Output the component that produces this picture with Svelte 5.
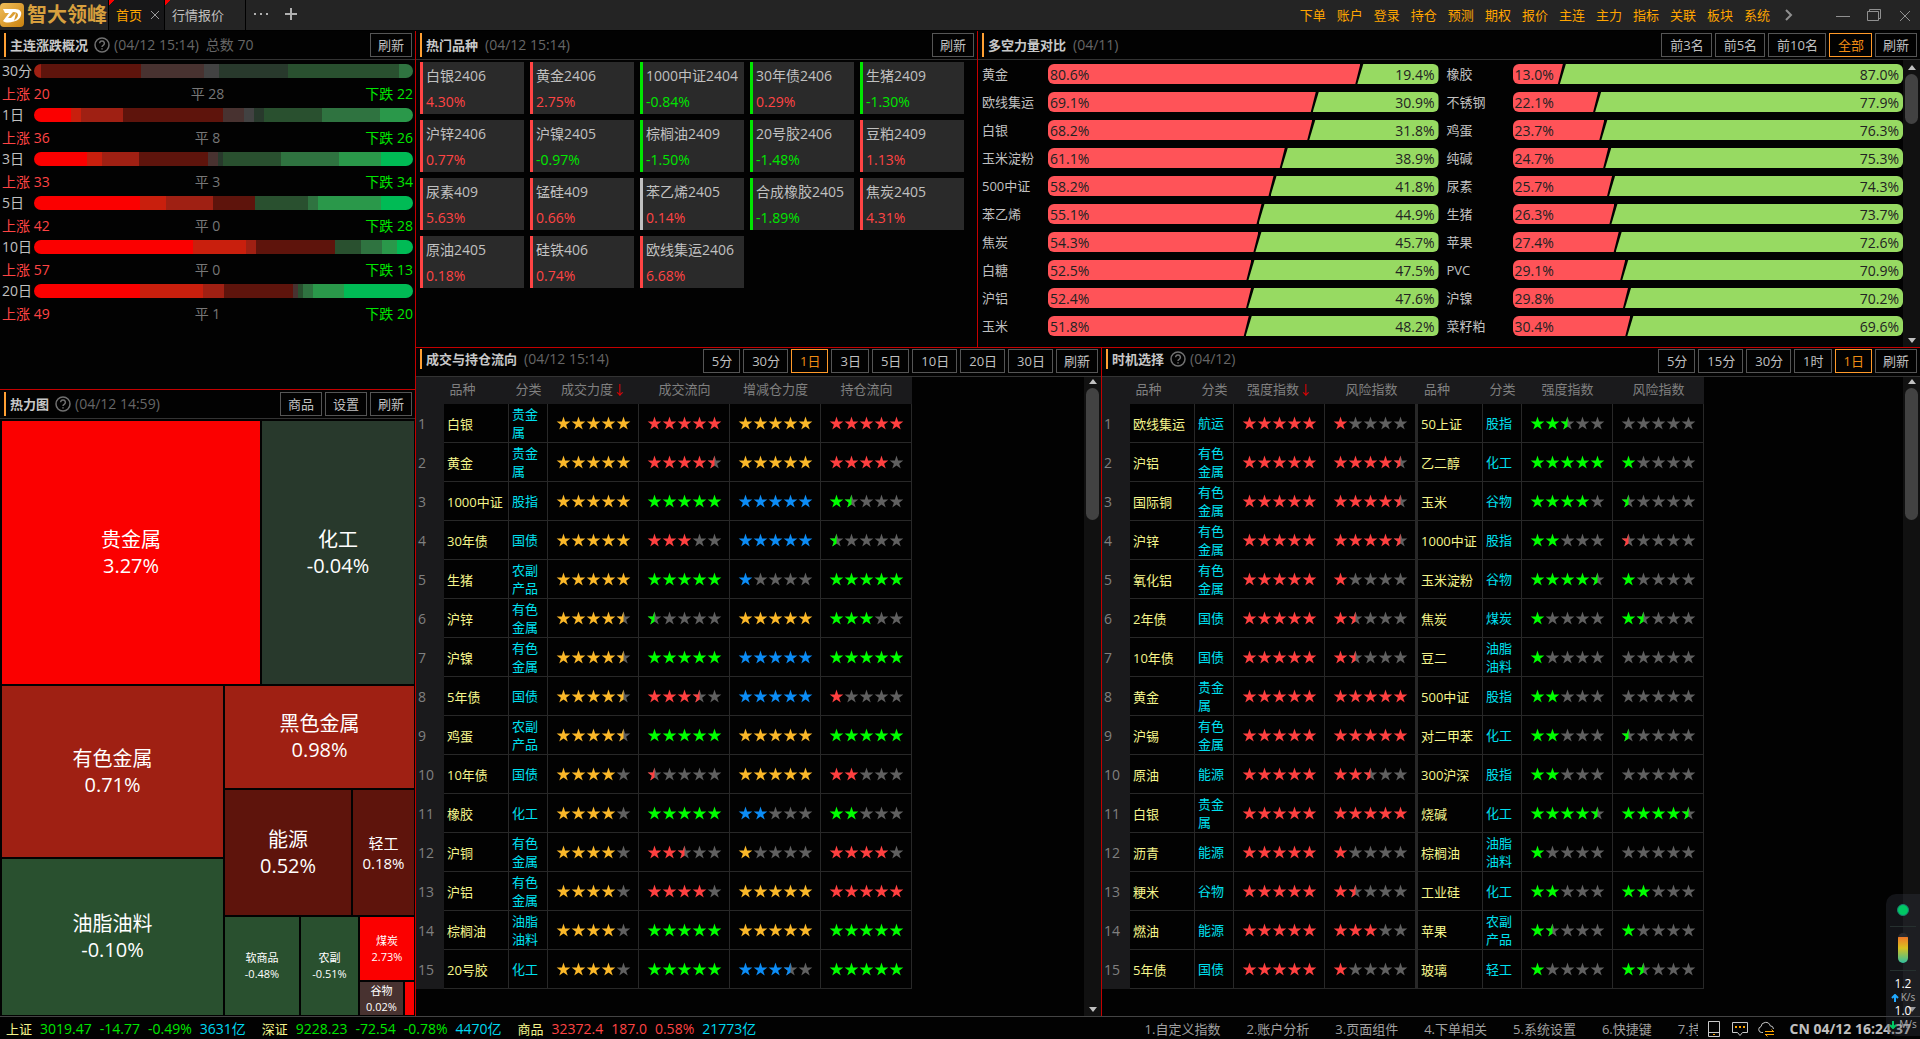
<script lang="ts">
  const menus = ['下单', '账户', '登录', '持仓', '预测', '期权', '报价', '主连', '主力', '指标', '关联', '板块', '系统'];

  // Segment colours go from strong rise to strong fall
  const c = {
    r4: '#fb0000', r3: '#c91f0d', r2: '#9f2013', r1: '#5e140c', r0: '#483230',
    n: '#424242',
    g0: '#28392c', g1: '#29502f', g2: '#2f7340', g3: '#2a984a', g4: '#00bb55'
  };

  const periods = [
    { name: '30分', up: 20, flat: 28, down: 22, segs: [[c.r2, 21], [c.r1, 300], [c.r0, 189], [c.n, 45], [c.g0, 207], [c.g1, 333], [c.g2, 42]] },
    { name: '1日', up: 36, flat: 8, down: 26, segs: [[c.r4, 111], [c.r3, 30], [c.r2, 126], [c.r1, 300], [c.r0, 63], [c.n, 30], [c.g0, 30], [c.g1, 174], [c.g2, 174], [c.g3, 99]] },
    { name: '3日', up: 33, flat: 3, down: 34, segs: [[c.r4, 159], [c.r3, 45], [c.r2, 111], [c.r1, 207], [c.r0, 30], [c.g0, 15], [c.g1, 174], [c.g2, 174], [c.g3, 126], [c.g4, 96]] },
    { name: '5日', up: 42, flat: 0, down: 28, segs: [[c.r4, 318], [c.r3, 78], [c.r2, 141], [c.r1, 126], [c.g1, 159], [c.g2, 30], [c.g3, 189], [c.g4, 96]] },
    { name: '10日', up: 57, flat: 0, down: 13, segs: [[c.r4, 477], [c.r3, 159], [c.r2, 30], [c.r1, 237], [c.g1, 78], [c.g2, 63], [c.g3, 45], [c.g4, 48]] },
    { name: '20日', up: 49, flat: 1, down: 20, segs: [[c.r4, 318], [c.r3, 189], [c.r2, 63], [c.r1, 207], [c.r0, 15], [c.g1, 15], [c.g2, 30], [c.g3, 93], [c.g4, 207]] }
  ];

  const hot = [
    ['白银2406', '4.30%', 'up'], ['黄金2406', '2.75%', 'up'], ['1000中证2404', '-0.84%', 'down'], ['30年债2406', '0.29%', 'down'], ['生猪2409', '-1.30%', 'down'],
    ['沪锌2406', '0.77%', 'up'], ['沪镍2405', '-0.97%', 'up'], ['棕榈油2409', '-1.50%', 'down'], ['20号胶2406', '-1.48%', 'down'], ['豆粕2409', '1.13%', 'up'],
    ['尿素409', '5.63%', 'up'], ['锰硅409', '0.66%', 'up'], ['苯乙烯2405', '0.14%', 'flat'], ['合成橡胶2405', '-1.89%', 'down'], ['焦炭2405', '4.31%', 'up'],
    ['原油2405', '0.18%', 'up'], ['硅铁406', '0.74%', 'up'], ['欧线集运2406', '6.68%', 'up']
  ];

  const power: [string, number][] = [
    ['黄金', 80.6], ['橡胶', 13.0],
    ['欧线集运', 69.1], ['不锈钢', 22.1],
    ['白银', 68.2], ['鸡蛋', 23.7],
    ['玉米淀粉', 61.1], ['纯碱', 24.7],
    ['500中证', 58.2], ['尿素', 25.7],
    ['苯乙烯', 55.1], ['生猪', 26.3],
    ['焦炭', 54.3], ['苹果', 27.4],
    ['白糖', 52.5], ['PVC', 29.1],
    ['沪铝', 52.4], ['沪镍', 29.8],
    ['玉米', 51.8], ['菜籽粕', 30.4]
  ];

  // name, category, then colour letter + number of stars
  const flow = [
    '白银 贵金属 y5 r5 y5 r5',
    '黄金 贵金属 y5 r4.5 y5 r4',
    '1000中证 股指 y5 g5 b5 g1.5',
    '30年债 国债 y5 r3 b5 g0.5',
    '生猪 农副产品 y5 g5 b1 g5',
    '沪锌 有色金属 y4.5 g0.5 y5 g3',
    '沪镍 有色金属 y4.5 g5 b5 g5',
    '5年债 国债 y4.5 r3.5 b5 r1',
    '鸡蛋 农副产品 y4.5 g5 y5 g5',
    '10年债 国债 y4 r0.5 y5 r2',
    '橡胶 化工 y4 g5 b2 g2',
    '沪铜 有色金属 y4 r2.5 y1 r4',
    '沪铝 有色金属 y4 r4 y5 r5',
    '棕榈油 油脂油料 y4 g5 y5 g5',
    '20号胶 化工 y4 g5 b3.5 g5'
  ].map((row) => row.split(' '));

  const timing = [
    '欧线集运 航运 r5 r1 50上证 股指 g2.5 g0',
    '沪铝 有色金属 r5 r4.5 乙二醇 化工 g5 g1',
    '国际铜 有色金属 r5 r4.5 玉米 谷物 g4 g0.5',
    '沪锌 有色金属 r5 r4.5 1000中证 股指 g2 r0.5',
    '氧化铝 有色金属 r5 r1 玉米淀粉 谷物 g4.5 g1',
    '2年债 国债 r5 r1.5 焦炭 煤炭 g1 g1.5',
    '10年债 国债 r5 r1.5 豆二 油脂油料 g1 g0',
    '黄金 贵金属 r5 r5 500中证 股指 g2 g0',
    '沪锡 有色金属 r5 r5 对二甲苯 化工 g2 g0.5',
    '原油 能源 r5 r2.5 300沪深 股指 g2 g0',
    '白银 贵金属 r5 r5 烧碱 化工 g4.5 g4.5',
    '沥青 能源 r5 r1 棕榈油 油脂油料 g1 g0',
    '粳米 谷物 r5 r1.5 工业硅 化工 g2 g2',
    '燃油 能源 r5 r3 苹果 农副产品 g1.5 g1',
    '5年债 国债 r5 r1 玻璃 轻工 g1 g1.5'
  ].map((row) => row.split(' '));

  const indexes = [
    { name: '上证', dir: 'down', values: ['3019.47', '-14.77', '-0.49%'], amount: '3631亿' },
    { name: '深证', dir: 'down', values: ['9228.23', '-72.54', '-0.78%'], amount: '4470亿' },
    { name: '商品', dir: 'up', values: ['32372.4', '187.0', '0.58%'], amount: '21773亿' }
  ];

  const shortcuts = ['1.自定义指数', '2.账户分析', '3.页面组件', '4.下单相关', '5.系统设置', '6.快捷键', '7.持仓'];

  let powerRange = $state('全部');
  let flowRange = $state('1日');
  let timingRange = $state('1日');
</script>

{#snippet help()}
  <svg class="help" viewBox="0 0 16 16" aria-hidden="true">
    <circle cx="8" cy="8" r="7" />
    <path d="M5.6 6.3a2.4 2.4 0 1 1 3.6 2.1c-.8.5-1.2.8-1.2 1.7M8 11.3v1.3" />
  </svg>
{/snippet}

{#snippet stars(code: string)}
  {@const value = Number(code.slice(1))}
  <span class="stars {code[0]}">
    {#each [0, 1, 2, 3, 4] as i (i)}
      <svg viewBox="-0.5 0 25 25" aria-hidden="true">
        <polygon class={value - i >= 1 ? 'on' : 'off'} points="12,1 14.7,9.3 23.4,9.3 16.4,14.4 19.1,22.7 12,17.6 4.9,22.7 7.6,14.4 .6,9.3 9.3,9.3" />
        {#if value - i === 0.5}
          <polygon class="on" points="12,1 12,17.6 4.9,22.7 7.6,14.4 .6,9.3 9.3,9.3" />
        {/if}
      </svg>
    {/each}
  </span>
{/snippet}

{#snippet scrollbar(size: string)}
  <div class="scrollbar {size}">
    <i class="arrow-up"></i>
    <i class="thumb"></i>
    <i class="arrow-down"></i>
  </div>
{/snippet}

{#snippet tile(name: string, pct: string, color: string, grow: number, size: string)}
  <div class="tile {size}" style="flex-grow: {grow}; background: {color}">
    <span>{name}</span>
    <span>{pct}</span>
  </div>
{/snippet}

<div class="app">
  <header class="topbar">
    <a class="brand" href="/">
      <svg viewBox="0 0 24 24" aria-hidden="true">
        <defs>
          <linearGradient id="gold" x1="0" y1="0" x2="1" y2="1">
            <stop offset="0" stop-color="#f0bd5a" />
            <stop offset="1" stop-color="#c9820f" />
          </linearGradient>
        </defs>
        <rect width="24" height="24" rx="4" fill="url(#gold)" />
        <path fill="#fff" d="M3 6h12c5 0 7 3 6 6-1 4-4 6-9 7 4-2 6-5 6-7 0-2-2-3-5-3l-5 6h3l5-5-2 8c-4 2-8 2-11 0l6-8H5z" />
      </svg>
      <strong>智大领峰</strong>
    </a>
    <nav class="tabs">
      <a class="tab active" href="#home">首页
        <svg viewBox="0 0 10 10" aria-hidden="true"><path d="M1 1l8 8M9 1l-8 8" /></svg>
      </a>
      <a class="tab wide" href="#quotes">行情报价</a>
    </nav>
    <button class="tool" aria-label="更多">
      <svg viewBox="0 0 16 12"><path d="M1 6h2M7 6h2M13 6h2" stroke-width="2" /></svg>
    </button>
    <button class="tool" aria-label="新建">
      <svg viewBox="0 0 16 12"><path d="M8 0v12M2 6h12" stroke-width="2" /></svg>
    </button>
    <nav class="menus">
      {#each menus as m (m)}
        <a href="#{m}">{m}</a>
      {/each}
    </nav>
    <div class="window">
      <button aria-label="展开"><svg viewBox="0 0 14 14"><path d="M4 2l5 5-5 5" stroke-width="2" /></svg></button>
      <button class="gap" aria-label="最小化"><svg viewBox="0 0 14 14"><path d="M0 8.5h14" /></svg></button>
      <button aria-label="还原"><svg viewBox="0 0 14 14"><path d="M.5 3.5h11v9H.5zM2.5 3.5V1.5h11v9h-2" /></svg></button>
      <button aria-label="关闭"><svg viewBox="0 0 14 14"><path d="M2 3l10 10M12 3L2 13" /></svg></button>
    </div>
  </header>

  <main>
    <div class="left">
      <section class="overview">
        <div class="head">
          <h2>主连涨跌概况</h2>
          {@render help()}
          <span class="time">(04/12 15:14)</span>
          <span class="time">总数 70</span>
          <div class="buttons"><button>刷新</button></div>
        </div>
        {#each periods as p (p.name)}
          <div class="period">
            <span class="period-name">{p.name}</span>
            <div class="segments">
              {#each p.segs as [color, size]}
                <i style="flex-grow: {size}; background: {color}"></i>
              {/each}
            </div>
          </div>
          <div class="counts">
            <span class="up">上涨 {p.up}</span>
            <span>平 {p.flat}</span>
            <span class="down">下跌 {p.down}</span>
          </div>
        {/each}
      </section>

      <section class="heat">
        <div class="head">
          <h2>热力图</h2>
          {@render help()}
          <span class="time">(04/12 14:59)</span>
          <div class="buttons">
            <button>商品</button>
            <button>设置</button>
            <button>刷新</button>
          </div>
        </div>
        <div class="treemap">
          <div class="row" style="flex-grow: 264">
            {@render tile('贵金属', '3.27%', c.r4, 258, 'lg')}
            {@render tile('化工', '-0.04%', c.g0, 152, 'lg')}
          </div>
          <div class="row" style="flex-grow: 329">
            <div class="col" style="flex-grow: 221">
              {@render tile('有色金属', '0.71%', c.r2, 171, 'lg')}
              {@render tile('油脂油料', '-0.10%', c.g1, 156, 'lg')}
            </div>
            <div class="col" style="flex-grow: 189">
              {@render tile('黑色金属', '0.98%', c.r2, 102, 'lg')}
              <div class="row" style="flex-grow: 125">
                {@render tile('能源', '0.52%', c.r1, 126, 'lg')}
                {@render tile('轻工', '0.18%', c.r1, 61, 'md')}
              </div>
              <div class="row" style="flex-grow: 98">
                {@render tile('软商品', '-0.48%', c.g1, 74, 'sm')}
                {@render tile('农副', '-0.51%', c.g1, 57, 'sm')}
                <div class="col" style="flex-grow: 54">
                  {@render tile('煤炭', '2.73%', c.r4, 63, 'sm')}
                  <div class="row" style="flex-grow: 33">
                    {@render tile('谷物', '0.02%', c.r0, 43, 'sm')}
                    <div class="tile" style="flex-grow: 9; background: {c.r4}"></div>
                  </div>
                </div>
              </div>
            </div>
          </div>
        </div>
      </section>
    </div>

    <div class="right">
      <div class="upper">
        <section class="hot">
          <div class="head">
            <h2>热门品种</h2>
            <span class="time">(04/12 15:14)</span>
            <div class="buttons"><button>刷新</button></div>
          </div>
          <div class="cards">
            {#each hot as [name, pct, edge] (name)}
              <div class="card {edge}-edge">
                <span>{name}</span>
                <span class={pct.startsWith('-') ? 'down' : 'up'}>{pct}</span>
              </div>
            {/each}
          </div>
        </section>

        <section class="power">
          <div class="head">
            <h2>多空力量对比</h2>
            <span class="time">(04/11)</span>
            <div class="buttons">
              {#each ['前3名', '前5名', '前10名', '全部'] as r (r)}
                <button class="range" class:selected={powerRange === r} onclick={() => (powerRange = r)}>{r}</button>
              {/each}
              <button>刷新</button>
            </div>
          </div>
          <div class="scroll-area">
            <div class="power-grid">
              {#each power as [name, value] (name)}
                <div class="power-item">
                  <span class="power-name">{name}</span>
                  <div class="power-bar">
                    <span class="long" style="width: calc((100% - 3px) * {value / 100})">{value.toFixed(1)}%</span>
                    <span class="short">{(100 - value).toFixed(1)}%</span>
                  </div>
                </div>
              {/each}
            </div>
            {@render scrollbar('small')}
          </div>
        </section>
      </div>

      <div class="lower">
        <section class="flow">
          <div class="head low">
            <h2>成交与持仓流向</h2>
            <span class="time">(04/12 15:14)</span>
            <div class="buttons">
              {#each ['5分', '30分', '1日', '3日', '5日', '10日', '20日', '30日'] as r (r)}
                <button class="range" class:selected={flowRange === r} onclick={() => (flowRange = r)}>{r}</button>
              {/each}
              <button>刷新</button>
            </div>
          </div>
          <div class="scroll-area">
            <div class="table-box">
              <table>
                <colgroup>
                  <col class="w-num" /><col class="w-name" /><col class="w-cat" />
                  <col class="w-star" /><col class="w-star" /><col class="w-star" /><col class="w-star" />
                </colgroup>
                <thead>
                  <tr>
                    <th colspan="2">品种</th>
                    <th>分类</th>
                    <th>成交力度<b>↓</b></th>
                    <th>成交流向</th>
                    <th>增减仓力度</th>
                    <th>持仓流向</th>
                  </tr>
                </thead>
                <tbody>
                  {#each flow as row, i (i)}
                    <tr>
                      <td class="num">{i + 1}</td>
                      <td class="name">{row[0]}</td>
                      <td class="cat">{row[1]}</td>
                      {#each row.slice(2) as s}
                        <td>{@render stars(s)}</td>
                      {/each}
                    </tr>
                  {/each}
                </tbody>
              </table>
            </div>
            {@render scrollbar('large')}
          </div>
        </section>

        <section class="timing">
          <div class="head low">
            <h2>时机选择</h2>
            {@render help()}
            <span class="time">(04/12)</span>
            <div class="buttons">
              {#each ['5分', '15分', '30分', '1时', '1日'] as r (r)}
                <button class="range" class:selected={timingRange === r} onclick={() => (timingRange = r)}>{r}</button>
              {/each}
              <button>刷新</button>
            </div>
          </div>
          <div class="scroll-area">
            <div class="table-box">
              <table>
                <colgroup>
                  <col class="w-num" /><col class="w-name" /><col class="w-cat" /><col class="w-star" /><col class="w-star-edge" />
                  <col class="w-name" /><col class="w-cat" /><col class="w-star" /><col class="w-star" />
                </colgroup>
                <thead>
                  <tr>
                    <th colspan="2">品种</th>
                    <th>分类</th>
                    <th>强度指数<b>↓</b></th>
                    <th>风险指数</th>
                    <th class="start">品种</th>
                    <th>分类</th>
                    <th>强度指数</th>
                    <th>风险指数</th>
                  </tr>
                </thead>
                <tbody>
                  {#each timing as row, i (i)}
                    <tr>
                      <td class="num">{i + 1}</td>
                      <td class="name">{row[0]}</td>
                      <td class="cat">{row[1]}</td>
                      <td>{@render stars(row[2])}</td>
                      <td class="edge">{@render stars(row[3])}</td>
                      <td class="name">{row[4]}</td>
                      <td class="cat">{row[5]}</td>
                      <td>{@render stars(row[6])}</td>
                      <td>{@render stars(row[7])}</td>
                    </tr>
                  {/each}
                </tbody>
              </table>
            </div>
            {@render scrollbar('large')}
          </div>
        </section>
      </div>
    </div>
  </main>

  <footer>
    {#each indexes as idx (idx.name)}
      <div class="index">
        <span class="index-name">{idx.name}</span>
        {#each idx.values as v}
          <span class={idx.dir}>{v}</span>
        {/each}
        <span class="amount">{idx.amount}</span>
      </div>
    {/each}
    <nav class="shortcuts">
      {#each shortcuts as s (s)}
        <a href="#{s}">{s}</a>
      {/each}
    </nav>
    <div class="status-icons">
      <svg viewBox="0 0 16 16" aria-hidden="true">
        <path d="M2.5.5h11v15h-11zM2.5 11.5h11" />
        <path class="accent" d="M7 13.5h2" />
      </svg>
      <svg viewBox="0 0 16 16" aria-hidden="true">
        <path d="M.5 1.5h15v10h-5l-2.500 3-2.500-3h-5z" />
        <path class="accent thick" d="M3 6h2M7 6h2M11 6h2" />
      </svg>
      <svg viewBox="0 0 16 16" aria-hidden="true">
        <path d="M5 11.5H3.500a3 3 0 0 1-.5-5.900 4.700 4.700 0 0 1 9.200-.8 3.400 3.400 0 0 1 3.300 3.200" />
        <path class="accent" d="M7 10.500h9M13.500 8.500l2 2M16 13.500H7M9.500 15.500l-2-2" />
      </svg>
    </div>
    <time>CN 04/12 16:24:37</time>
  </footer>

  <aside class="monitor">
    <i class="dot"></i>
    <hr />
    <i class="gauge"></i>
    <hr />
    <span class="speed">1.2</span>
    <span class="unit">
      <svg viewBox="0 0 8 8" class="sent" aria-hidden="true"><path d="M4 8V2M1 4l3-3 3 3" /></svg>K/s
    </span>
    <span class="speed">1.0</span>
    <span class="unit">
      <svg viewBox="0 0 8 8" class="received" aria-hidden="true"><path d="M4 0v6M1 4l3 3 3-3" /></svg>M/s
    </span>
  </aside>
</div>

<style>
  :global(body) {
    background: #000;
  }

  .app {
    position: relative;
    display: flex;
    flex-direction: column;
    height: 100vh;
    overflow: hidden;
    background: #020202;
    color: #c0c0c0;
    font: 13px/20px 'Open Sans', 'Noto Sans CJK SC', sans-serif;
  }

  .app * {
    box-sizing: border-box;
  }

  a {
    color: inherit;
    text-decoration: none;
  }

  button {
    font: inherit;
    color: inherit;
    background: none;
    border: 0;
    padding: 0;
    cursor: pointer;
  }

  .up {
    color: #ff4444;
  }

  .down {
    color: #00e600;
  }

  /* Top bar */
  .topbar {
    display: flex;
    align-items: center;
    flex: none;
    height: 31px;
    background: #242424;
    border-bottom: 1px solid #000;
  }

  .brand {
    display: flex;
    align-items: center;
    gap: 3px;
    width: 108px;
    flex: none;
  }

  .brand svg {
    width: 24px;
    height: 24px;
  }

  .brand strong {
    color: #d8a03e;
    font-size: 20px;
    line-height: 28px;
    white-space: nowrap;
  }

  .tabs {
    display: flex;
    align-self: stretch;
  }

  .tab {
    display: flex;
    align-items: center;
    gap: 8px;
    padding: 0 4px 0 7px;
    border-left: 1px solid #000;
    background: linear-gradient(135deg, #fb0000 4px, transparent 4px);
  }

  .tab.active {
    color: #ffa500;
    background: linear-gradient(135deg, #fb0000 4px, #171718 4px);
  }

  .tab.wide {
    padding-right: 21px;
    border-right: 1px solid #000;
  }

  .tab svg {
    width: 10px;
    height: 10px;
    stroke: #999;
  }

  .tool {
    width: 30px;
    height: 28px;
  }

  .tool svg {
    width: 16px;
    height: 12px;
    stroke: #b0b0b0;
  }

  .menus {
    display: flex;
    gap: 11px;
    margin-left: auto;
    color: #ffa500;
    white-space: nowrap;
  }

  .window {
    display: flex;
    gap: 17px;
    padding: 0 8px 0 12px;
  }

  .window button {
    display: flex;
    width: 14px;
  }

  .window .gap {
    margin-left: 23px;
  }

  .window svg {
    width: 14px;
    height: 14px;
    fill: none;
    stroke: #909090;
  }

  /* Panels */
  main {
    display: grid;
    grid-template-columns: 416fr 1504fr;
    flex: 1;
    min-height: 0;
  }

  .left,
  .right {
    display: flex;
    flex-direction: column;
    min-width: 0;
    min-height: 0;
  }

  .left {
    border-right: 1px solid #c40000;
  }

  section {
    display: flex;
    flex-direction: column;
    min-width: 0;
    min-height: 0;
  }

  .overview {
    flex: 358 1 0;
    border-bottom: 1px solid #c40000;
  }

  .heat {
    flex: 627 1 0;
  }

  .upper,
  .lower {
    display: grid;
    min-height: 0;
  }

  .upper {
    flex: 316 1 0;
    grid-template-columns: 562fr 942fr;
    border-bottom: 1px solid #c40000;
  }

  .lower {
    flex: 669 1 0;
    grid-template-columns: 686fr 818fr;
  }

  .hot,
  .flow {
    border-right: 1px solid #c40000;
  }

  .head {
    display: flex;
    align-items: center;
    flex: none;
    height: 29px;
    padding: 0 3px 0 4px;
    border-bottom: 1px solid #333;
    white-space: nowrap;
  }

  .head h2 {
    margin: 0;
    padding-left: 4px;
    border-left: 2px solid #ffa033;
    font-size: 13px;
    line-height: 24px;
    font-weight: 700;
    color: #c8c8c8;
  }

  .head.low h2 {
    line-height: 20px;
  }

  .head.low h2,
  .head.low .time,
  .head.low .help {
    margin-bottom: 6px;
  }

  .head.low .buttons {
    margin-bottom: 1px;
  }

  .help {
    width: 16px;
    height: 16px;
    margin-left: 6px;
    fill: none;
    stroke: #707070;
    stroke-width: 1.5;
  }

  .time {
    margin-left: 7px;
    font-size: 14px;
    color: #666;
  }

  .help + .time {
    margin-left: 4px;
  }

  .buttons {
    display: flex;
    gap: 3px;
    margin-left: auto;
  }

  .buttons button {
    height: 24px;
    padding: 0 7px;
    border: 1px solid #555;
    line-height: 22px;
  }

  .buttons .range {
    padding-left: 8px;
  }

  .buttons .selected {
    color: #f08c14;
    border-color: #ff9a2a;
  }

  /* Rise and fall overview */
  .period,
  .counts {
    display: flex;
    align-items: center;
    height: 22px;
    padding: 0 2px;
  }

  .period-name {
    width: 32px;
    font-size: 14px;
    white-space: nowrap;
  }

  .segments {
    display: flex;
    flex: 1;
    height: 14px;
    border-radius: 7px;
    overflow: hidden;
  }

  .segments i {
    flex-basis: 0;
  }

  .counts {
    justify-content: space-between;
    padding-top: 2px;
    font-size: 14px;
    color: #777;
  }

  /* Heat map */
  .treemap {
    display: flex;
    flex-direction: column;
    flex: 1;
    gap: 2px;
    min-height: 0;
    padding: 2px 1px 1px 2px;
    color: #fff;
  }

  .row,
  .col {
    display: flex;
    flex-basis: 0;
    gap: 2px;
    min-width: 0;
    min-height: 0;
  }

  .col {
    flex-direction: column;
  }

  .tile {
    display: flex;
    flex-direction: column;
    align-items: center;
    justify-content: center;
    flex-basis: 0;
    min-width: 0;
    min-height: 0;
    white-space: nowrap;
  }

  .lg {
    font-size: 20px;
    line-height: 26px;
  }

  .md {
    font-size: 15px;
    line-height: 20px;
  }

  .sm {
    font-size: 11px;
    line-height: 16px;
  }

  /* Hot contracts */
  .cards {
    display: grid;
    grid-template-columns: repeat(auto-fill, 104px);
    gap: 6px;
    padding: 2px 4px;
  }

  .card {
    display: flex;
    flex-direction: column;
    gap: 6px;
    height: 52px;
    padding: 4px 3px 2px;
    border-left: 3px solid #c0c0c0;
    background: #2a2a2a;
    font-size: 14px;
    white-space: nowrap;
  }

  .up-edge {
    border-color: #ff4444;
  }

  .down-edge {
    border-color: #00e600;
  }

  /* Long and short power */
  .scroll-area {
    display: flex;
    flex: 1;
    min-height: 0;
  }

  .power-grid {
    display: grid;
    grid-template-columns: 1fr 1fr;
    column-gap: 8px;
    align-content: start;
    flex: 1;
    padding-left: 4px;
    overflow: hidden;
  }

  .power-item {
    display: flex;
    align-items: center;
    height: 28px;
  }

  .power-name {
    width: 66px;
  }

  .power-bar {
    display: flex;
    flex: 1;
    height: 20px;
    border-radius: 6px;
    overflow: hidden;
    font-size: 14px;
    line-height: 22px;
    color: #222;
  }

  .long {
    padding-left: 2px;
    background: #ff5358;
    clip-path: polygon(0 0, 100% 0, calc(100% - 5px) 100%, 0 100%);
  }

  .short {
    flex: 1;
    margin-left: -3px;
    padding-right: 4px;
    background: #97da62;
    text-align: right;
    clip-path: polygon(6px 0, 100% 0, 100% 100%, 0 100%);
  }

  .scrollbar {
    display: flex;
    flex-direction: column;
    align-items: center;
    flex: none;
    width: 17px;
    padding: 5px 0 4px;
    background: #111;
  }

  .scrollbar.large {
    padding-top: 2px;
  }

  .arrow-up,
  .arrow-down {
    border: 4px solid transparent;
  }

  .arrow-up {
    border-top: 0;
    border-bottom: 5px solid #c0c0c0;
  }

  .arrow-down {
    margin-top: auto;
    border-bottom: 0;
    border-top: 5px solid #c0c0c0;
  }

  .thumb {
    width: 13px;
    margin-top: 4px;
    border-radius: 7px;
    background: #424242;
  }

  .small .thumb {
    height: 50px;
  }

  .large .thumb {
    height: 132px;
  }

  /* Star tables */
  .table-box {
    flex: 1;
    min-width: 0;
    overflow: hidden;
  }

  table {
    width: min-content;
    table-layout: fixed;
    border-collapse: separate;
    border-spacing: 0;
  }

  .w-num {
    width: 28px;
  }

  .w-name {
    width: 65px;
  }

  .w-cat {
    width: 39px;
  }

  .w-star {
    width: 91px;
  }

  .w-star-edge {
    width: 93px;
  }

  th {
    height: 27px;
    padding: 0 0 2px;
    background: #1a1a1c;
    color: #808080;
    font-weight: 400;
    white-space: nowrap;
  }

  th.start {
    padding-left: 6px;
    text-align: left;
  }

  th b {
    color: #e00000;
    font-weight: 400;
  }

  td {
    height: 39px;
    padding: 2px 0 0;
    border-right: 1px solid #282828;
    border-bottom: 1px solid #282828;
    line-height: 18px;
    vertical-align: middle;
  }

  td.edge {
    border-right: 3px solid #282828;
  }

  .num {
    padding-left: 2px;
    border: 0;
    background: #1a1a1c;
    color: #808080;
    font-size: 14px;
  }

  .name {
    padding-left: 3px;
    color: #f5f58c;
    white-space: nowrap;
  }

  .cat {
    padding: 1px 3px 0;
    color: #00e0f0;
  }

  .stars {
    display: flex;
    justify-content: center;
  }

  .stars svg {
    width: 15px;
    height: 15px;
  }

  .off {
    fill: #606060;
  }

  .y .on {
    fill: #fbb829;
  }

  .r .on {
    fill: #ff4040;
  }

  .g .on {
    fill: #00ff00;
  }

  .b .on {
    fill: #0c8cf5;
  }

  /* Status bar */
  footer {
    display: flex;
    align-items: center;
    flex: none;
    height: 23px;
    padding: 2px 9px 0 6px;
    border-top: 1px solid #444;
    white-space: nowrap;
  }

  .index {
    display: flex;
    gap: 8px;
    margin-right: 16px;
    font-size: 14px;
  }

  .index-name {
    font-size: 13px;
    color: #f5f58c;
  }

  .amount {
    color: #00d8f0;
  }

  .shortcuts {
    display: flex;
    gap: 26px;
    width: 553px;
    margin-left: auto;
    overflow: hidden;
    color: #a0a0a0;
  }

  .status-icons {
    display: flex;
    gap: 10px;
    padding: 0 16px 0 8px;
  }

  .status-icons svg {
    width: 16px;
    height: 16px;
    fill: none;
    stroke: #c8c8c8;
  }

  .status-icons .accent {
    stroke: #ffa500;
  }

  .status-icons .thick {
    stroke-width: 2;
  }

  time {
    font-size: 14px;
    font-weight: 700;
  }

  /* Floating network monitor */
  .monitor {
    position: absolute;
    right: 0;
    bottom: 3px;
    display: flex;
    flex-direction: column;
    align-items: center;
    width: 34px;
    height: 142px;
    padding-top: 10px;
    border-radius: 10px 0 0 10px;
    background: rgba(60, 62, 76, 0.3);
  }

  .dot {
    width: 12px;
    height: 12px;
    border: 1px solid #1a7a70;
    border-radius: 50%;
    background: #00c864;
  }

  hr {
    width: 26px;
    margin: 10px 0 6px;
    border: 0;
    border-top: 1px solid #26302f;
  }

  .gauge {
    width: 10px;
    height: 30px;
    border-radius: 5px;
    background: linear-gradient(#2a2a2e 4px, #f07828 4px, #d8c020 50%, #30c0a0);
  }

  .gauge + hr {
    margin: 7px 0 5px;
  }

  .speed {
    color: #fff;
    font-size: 12px;
    line-height: 16px;
  }

  .unit {
    display: flex;
    align-items: center;
    gap: 2px;
    font-size: 10px;
    line-height: 11px;
    color: #aaa;
  }

  .unit svg {
    width: 8px;
    height: 8px;
    fill: none;
    stroke-width: 2;
  }

  .sent {
    stroke: #20a8ff;
  }

  .received {
    stroke: #00c864;
  }
</style>
